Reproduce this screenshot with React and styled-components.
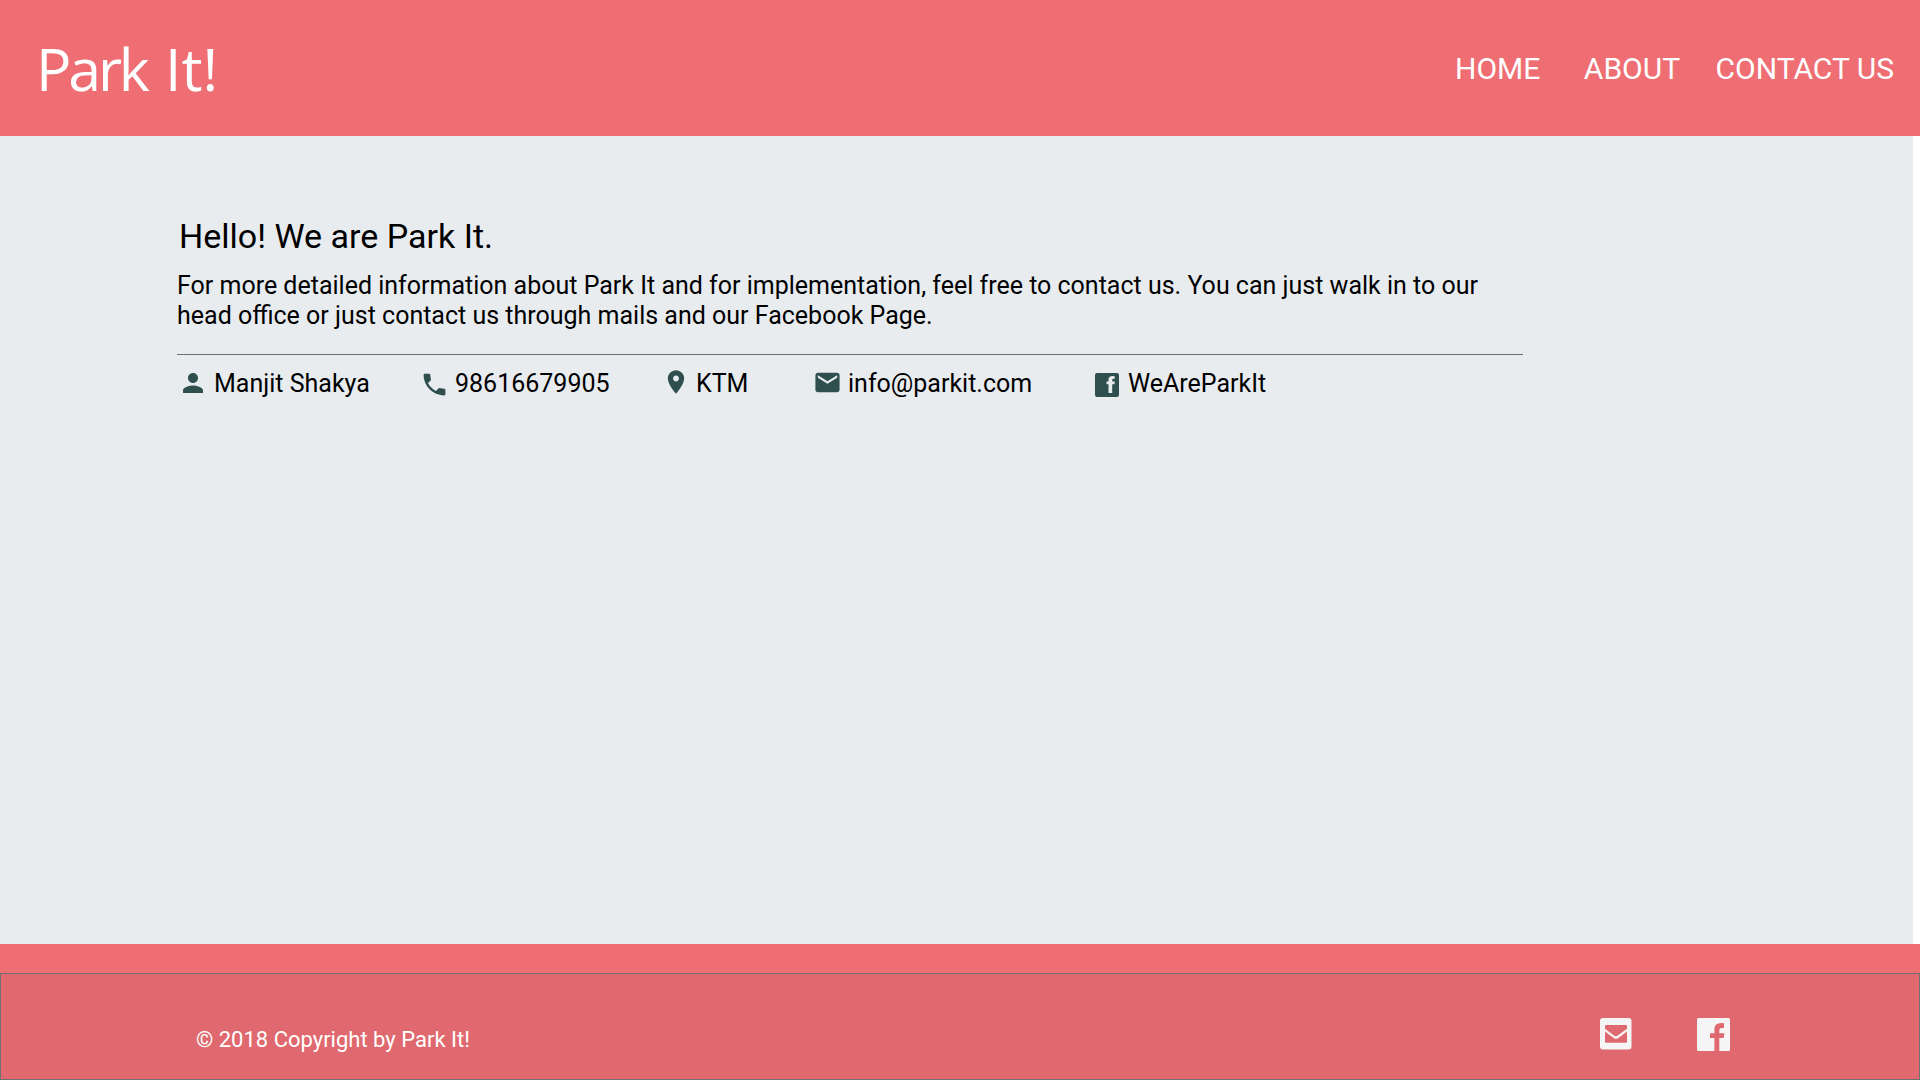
import React from "react";
import styled, { createGlobalStyle } from "styled-components";

const GlobalStyle = createGlobalStyle`
  * { box-sizing: border-box; }
  body { margin: 0; background: #fff; font-family: Roboto, "Liberation Sans", sans-serif; }
`;

const Page = styled.div`
  display: flex;
  flex-direction: column;
  height: 1080px;
  overflow: hidden;
`;

const Header = styled.header`
  display: flex;
  justify-content: space-between;
  height: 136px;
  padding: 0 26px 0 36px;
  background: #ee6e73;
  color: #fff;
`;

const Brand = styled.h1`
  margin: 0;
  padding-top: 28px;
  font: 400 59px/80px "Open Sans", sans-serif;
  word-spacing: 3px;
  white-space: nowrap;
`;

const BrandLead = styled.span`
  letter-spacing: -3.2px;
`;

const Nav = styled.nav`
  display: flex;
  gap: 42px;
  padding-top: 51px;
`;

const NavLink = styled.a`
  font-size: 30px;
  line-height: 36px;
  margin-right: ${(p) => p.$after || 0}px;
  white-space: nowrap;
`;

const Main = styled.main`
  height: 808px;
  width: 1913px;
  padding: 78px 0 0 177px;
  background: #e8ecef;
  color: #000;
`;

const Title = styled.h2`
  margin: 0;
  padding-left: 2px;
  font-size: 34px;
  font-weight: 400;
  line-height: 44px;
`;

const Intro = styled.p`
  margin: 13px 0 23px;
  font-size: 25px;
  line-height: 30px;
  white-space: nowrap;
`;

const Contacts = styled.ul`
  display: flex;
  width: 1346px;
  margin: 0;
  padding: 14px 0 0 3px;
  list-style: none;
  border-top: 1px solid #707070;
`;

const Contact = styled.li`
  display: flex;
  width: ${(p) => p.$width}px;
  font-size: 25px;
  line-height: 30px;
  white-space: nowrap;
`;

const ContactIcon = styled.svg`
  flex: none;
  width: ${(p) => p.$size}px;
  height: ${(p) => p.$size}px;
  margin-top: ${(p) => p.$top}px;
  margin-left: ${(p) => p.$left || 0}px;
  margin-right: ${(p) => p.$gap}px;
  fill: #2f4f4f;
`;

const Footer = styled.footer`
  height: 136px;
  padding-top: 29px;
  background: #ee6e73;
`;

const FooterPanel = styled.div`
  display: flex;
  justify-content: space-between;
  height: 107px;
  padding: 0 189px 0 195px;
  border: 1px solid #707070;
  background: #df696e;
`;

const Copyright = styled.p`
  margin: 0;
  padding-top: 52px;
  color: #fff;
  font-size: 22px;
  line-height: 28px;
`;

const Social = styled.div`
  display: flex;
  gap: 65px;
  padding-top: 44px;
`;

const SocialIcon = styled.svg`
  width: ${(p) => p.$size}px;
  height: ${(p) => p.$size}px;
  fill: #f5f5f5;
`;

const contacts = [
  { label: "Manjit Shakya", width: 240, size: 30, top: -1, left: -2.4, gap: 6.4,
    path: "M12 12c2.21 0 4-1.79 4-4s-1.79-4-4-4-4 1.79-4 4 1.79 4 4 4zm0 2c-2.67 0-8 1.34-8 4v2h16v-2c0-2.66-5.33-4-8-4z" },
  { label: "98616679905", width: 243, size: 29, top: 1, gap: 6,
    path: "M6.62 10.79c1.44 2.83 3.76 5.14 6.59 6.59l2.2-2.2c.27-.27.67-.36 1.02-.24 1.12.37 2.33.57 3.57.57.55 0 1 .45 1 1V20c0 .55-.45 1-1 1-9.39 0-17-7.61-17-17 0-.55.45-1 1-1h3.5c.55 0 1 .45 1 1 0 1.25.2 2.45.57 3.57.11.35.03.74-.25 1.02l-2.2 2.2z" },
  { label: "KTM", width: 150, size: 28, top: -1, left: -1, gap: 6,
    path: "M12 2C8.13 2 5 5.13 5 9c0 5.25 7 13 7 13s7-7.75 7-13c0-3.87-3.13-7-7-7zm0 9.5c-1.38 0-2.500-1.12-2.500-2.500s1.12-2.500 2.500-2.500 2.500 1.12 2.500 2.500-1.12 2.500-2.500 2.500z" },
  { label: "info@parkit.com", width: 282, size: 29, top: -1, gap: 6,
    path: "M20 4H4c-1.1 0-1.99.9-1.99 2L2 18c0 1.1.9 2 2 2h16c1.1 0 2-.9 2-2V6c0-1.1-.9-2-2-2zm0 4l-8 5-8-5V6l8 5 8-5v2z" },
  { label: "WeAreParkIt", width: 180, size: 24, top: 4, gap: 9,
    path: "M2 0h20a2 2 0 0 1 2 2v20a2 2 0 0 1-2 2H2a2 2 0 0 1-2-2V2a2 2 0 0 1 2-2zM13.5 20h3.7v-8.7h2.2l.4-2.9h-2.6v-1.300q0-1.300 1.300-1.300h1.200V3.300q-6.200-1-6.200 3.500v1.600h-2v2.900h2z" },
];

export default function App() {
  return (
    <Page>
      <GlobalStyle />
      <Header>
        <Brand>
          <BrandLead>Park</BrandLead> It!
        </Brand>
        <Nav>
          <NavLink $after={1.5}>HOME</NavLink>
          <NavLink $after={-6.5}>ABOUT</NavLink>
          <NavLink>CONTACT US</NavLink>
        </Nav>
      </Header>
      <Main>
        <Title>Hello! We are Park It.</Title>
        <Intro>
          For more detailed information about Park It and for implementation, feel free to contact us. You can just walk in to our
          <br />
          head office or just contact us through mails and our Facebook Page.
        </Intro>
        <Contacts>
          {contacts.map((c) => (
            <Contact key={c.label} $width={c.width}>
              <ContactIcon viewBox="0 0 24 24" $size={c.size} $top={c.top} $left={c.left} $gap={c.gap}>
                <path fillRule="evenodd" d={c.path} />
              </ContactIcon>
              {c.label}
            </Contact>
          ))}
        </Contacts>
      </Main>
      <Footer>
        <FooterPanel>
          <Copyright>© 2018 Copyright by Park It!</Copyright>
          <Social>
            <SocialIcon viewBox="0 0 32 32" $size={32}>
              <path
                fillRule="evenodd"
                d="M3 0h25.500a3 3 0 0 1 3 3v25.500a3 3 0 0 1-3 3h-25.500A3 3 0 0 1 0 28.500V3A3 3 0 0 1 3 0zM5 8v2.800L14 17.500q1.900 1.400 3.800 0L27 10.800V8q0-1-1-1H6Q5 7 5 8zM5 13.400v10.400q0 1 1 1h20q1 0 1-1V13.400l-8.700 6.500q-2.300 1.700-4.600 0z"
              />
            </SocialIcon>
            <SocialIcon viewBox="0 0 33 33" $size={33}>
              <path d="M1.500 0h30A1.500 1.500 0 0 1 33 1.500v30a1.500 1.500 0 0 1-1.500 1.500H22.300V20h4.400l.7-4.800h-5.100v-2.700q0-2.500 2.500-2.500H27V5.300q-9.600-1.300-9.600 6.100v3.800H13V20h4.400v13H1.500A1.500 1.500 0 0 1 0 31.500v-30A1.500 1.500 0 0 1 1.500 0z" />
            </SocialIcon>
          </Social>
        </FooterPanel>
      </Footer>
    </Page>
  );
}
